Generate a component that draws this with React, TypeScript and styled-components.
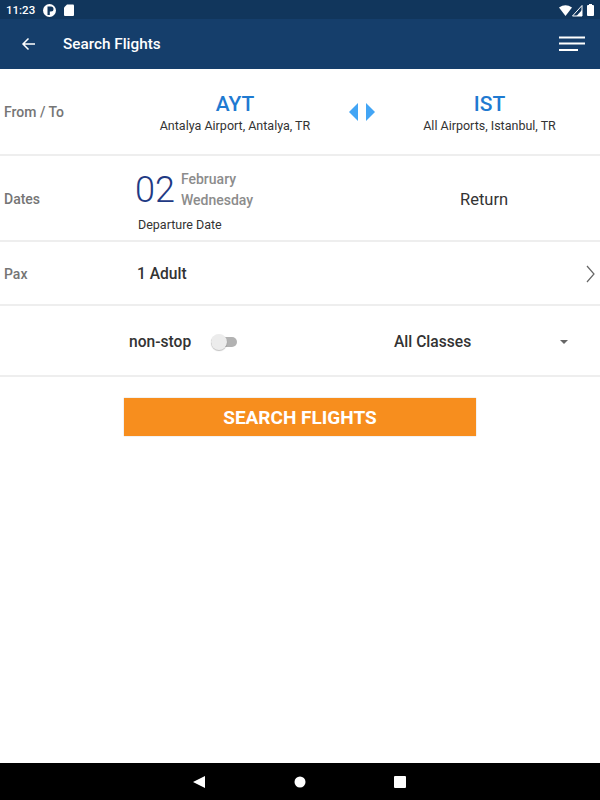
import React from 'react';
import styled, { createGlobalStyle } from 'styled-components';

const GlobalStyle = createGlobalStyle`
  html, body {
    margin: 0;
    padding: 0;
    background: #fff;
    font-family: Roboto, "Liberation Sans", sans-serif;
  }
`;

const Screen = styled.div`
  width: 600px;
  height: 800px;
  display: flex;
  flex-direction: column;
  overflow: hidden;
  background: #fff;
`;

const StatusBar = styled.div`
  height: 19px;
  flex: none;
  display: flex;
  align-items: center;
  padding: 0 6px;
  gap: 8px;
  background: #11365c;
  color: #fff;
  font-size: 11.5px;
  font-weight: 500;
`;

const StatusRight = styled.div`
  margin-left: auto;
  display: flex;
  align-items: center;
`;

const AppBar = styled.div`
  height: 50px;
  flex: none;
  display: flex;
  align-items: center;
  padding: 0 15px 0 21px;
  background: #153e6b;
  color: #fff;
`;

const AppTitle = styled.div`
  margin-left: 27px;
  font-size: 15.3px;
  font-weight: 500;
`;

const MenuButton = styled.svg`
  margin-left: auto;
`;

const Row = styled.div<{ $height: number; $nudge?: boolean }>`
  height: ${({ $height }) => $height}px;
  flex: none;
  box-sizing: border-box;
  display: flex;
  align-items: center;
  padding-top: ${({ $nudge }) => ($nudge ? 2 : 0)}px;
  border-bottom: 2px solid #eeeeee;
`;

const RowLabel = styled.div`
  width: 124px;
  flex: none;
  padding-left: 4px;
  box-sizing: border-box;
  color: #757575;
  font-size: 14px;
  font-weight: 500;
`;

const Place = styled.div<{ $width: number }>`
  width: ${({ $width }) => $width}px;
  flex: none;
  display: flex;
  flex-direction: column;
  align-items: center;
  margin-top: 2px;
`;

const Code = styled.div`
  color: #1f7ad1;
  font-size: 21px;
  line-height: 25px;
  font-weight: 500;
`;

const PlaceName = styled.div`
  color: #333;
  font-size: 12.5px;
  line-height: 17px;
`;

const Swap = styled.svg`
  flex: none;
  margin-left: 2px;
`;

const DepartureBlock = styled.div`
  width: 301px;
  flex: none;
  margin-top: 3px;
  padding-left: 11px;
  box-sizing: border-box;
`;

const DateLine = styled.div`
  display: flex;
  align-items: center;
  gap: 6px;
`;

const DayNumber = styled.div`
  color: #1f3a84;
  font-size: 36px;
  line-height: 42px;
  font-weight: 300;
`;

const DateText = styled.div`
  color: #8c8c8c;
  font-size: 14px;
  line-height: 21px;
  font-weight: 500;
`;

const DepartureCaption = styled.div`
  margin: 7px 0 0 3px;
  color: #333;
  font-size: 12.5px;
  line-height: 14px;
`;

const ReturnText = styled.div`
  flex: 1;
  padding-left: 35px;
  color: #333;
  font-size: 16.5px;
`;

const PaxValue = styled.div`
  flex: 1;
  padding-left: 13px;
  color: #333;
  font-size: 15.6px;
  font-weight: 500;
`;

const Chevron = styled.svg`
  flex: none;
  margin-right: 5px;
`;

const NonStop = styled.div`
  width: 124px;
  margin-left: 129px;
  flex: none;
  display: flex;
  align-items: center;
  gap: 20px;
  color: #333;
  font-size: 15.6px;
  font-weight: 500;
`;

const Toggle = styled.div`
  position: relative;
  width: 26px;
  height: 10px;
  border-radius: 5px;
  background: #b2b2b2;

  &::before {
    content: '';
    position: absolute;
    left: 0;
    top: -3px;
    width: 16px;
    height: 16px;
    border-radius: 50%;
    background: #ececec;
    box-shadow: 0 1px 1px rgba(0, 0, 0, 0.25);
  }
`;

const ClassSelect = styled.div`
  flex: 1;
  display: flex;
  align-items: center;
  justify-content: space-between;
  margin-left: 141px;
  padding-right: 32px;
  color: #333;
  font-size: 15.6px;
  font-weight: 500;
`;

const Caret = styled.div`
  width: 0;
  height: 0;
  border-left: 4px solid transparent;
  border-right: 4px solid transparent;
  border-top: 4px solid #666;
`;

const Body = styled.div`
  flex: 1;
  display: flex;
  justify-content: center;
  align-items: flex-start;
  padding-top: 21px;
`;

const SearchButton = styled.button`
  width: 352px;
  height: 38px;
  padding: 0;
  box-sizing: border-box;
  border: none;
  background: #f78e1e;
  box-shadow: 0 0 1px rgba(0, 0, 0, 0.3);
  color: #fff;
  font-family: inherit;
  font-size: 19px;
  font-weight: 700;
`;

const NavBar = styled.div`
  height: 37px;
  flex: none;
  display: flex;
  align-items: center;
  justify-content: center;
  background: #000;
`;

const NavIcons = styled.svg`
  display: block;
`;

const App = () => (
  <Screen>
    <GlobalStyle />
    <StatusBar>
      <span>11:23</span>
      <svg width="31" height="14" viewBox="0 0 31 14">
        <circle cx="6.500" cy="7.500" r="6.500" fill="#fff" />
        <path d="M4.500 3.500h3.500a2.500 2.500 0 0 1 0 5H6.800V12H4.500z" fill="#11365c" />
        <path d="M24 1.500h6a1 1 0 0 1 1 1v9.500a1 1 0 0 1-1 1h-8a1 1 0 0 1-1-1V4.500z" fill="#fff" />
      </svg>
      <StatusRight>
        <svg width="35" height="14" viewBox="0 0 35 14">
          <path d="M0 4.500Q6.500 0 13 4.500L6.500 13z" fill="#fff" />
          <path d="M23 2.500V13H13.500z" fill="none" stroke="#fff" strokeWidth="1" />
          <path d="M23 7V13H17.500z" fill="#fff" />
          <rect x="28" y="2" width="7" height="11" rx="1" fill="#fff" />
          <rect x="30" y="1" width="3" height="2" fill="#fff" />
        </svg>
      </StatusRight>
    </StatusBar>
    <AppBar>
      <svg width="15" height="14" viewBox="0 0 15 14" fill="none" stroke="#fff" strokeWidth="1.500">
        <path d="M14 7H2M7.500 1.500 2 7l5.500 5.500" />
      </svg>
      <AppTitle>Search Flights</AppTitle>
      <MenuButton width="26" height="16" viewBox="0 0 26 16" fill="#fff">
        <rect x="0" y="0.500" width="26" height="2" />
        <rect x="0" y="6.500" width="26" height="2" />
        <rect x="0" y="13" width="19" height="2" />
      </MenuButton>
    </AppBar>
    <Row $height={87}>
      <RowLabel>From / To</RowLabel>
      <Place $width={222}>
        <Code>AYT</Code>
        <PlaceName>Antalya Airport, Antalya, TR</PlaceName>
      </Place>
      <Swap width="28" height="18" viewBox="0 0 28 18" fill="#42a5f5">
        <path d="M10 0v18L1 9z" />
        <path d="M18 0v18l9-9z" />
      </Swap>
      <Place $width={227}>
        <Code>IST</Code>
        <PlaceName>All Airports, Istanbul, TR</PlaceName>
      </Place>
    </Row>
    <Row $height={86} $nudge>
      <RowLabel>Dates</RowLabel>
      <DepartureBlock>
        <DateLine>
          <DayNumber>02</DayNumber>
          <DateText>
            February
            <br />
            Wednesday
          </DateText>
        </DateLine>
        <DepartureCaption>Departure Date</DepartureCaption>
      </DepartureBlock>
      <ReturnText>Return</ReturnText>
    </Row>
    <Row $height={64} $nudge>
      <RowLabel>Pax</RowLabel>
      <PaxValue>1 Adult</PaxValue>
      <Chevron width="9" height="18" viewBox="0 0 9 18" fill="none" stroke="#666" strokeWidth="1.200">
        <path d="M1 1l7 8-7 8" />
      </Chevron>
    </Row>
    <Row $height={71} $nudge>
      <NonStop>
        non-stop
        <Toggle />
      </NonStop>
      <ClassSelect>
        All Classes
        <Caret />
      </ClassSelect>
    </Row>
    <Body>
      <SearchButton>SEARCH FLIGHTS</SearchButton>
    </Body>
    <NavBar>
      <NavIcons width="214" height="14" viewBox="0 0 214 14" fill="#fff">
        <path d="M12 1v12L0 7z" />
        <circle cx="107" cy="7" r="5.500" />
        <rect x="201" y="1" width="12" height="12" rx="1" />
      </NavIcons>
    </NavBar>
  </Screen>
);

export default App;
